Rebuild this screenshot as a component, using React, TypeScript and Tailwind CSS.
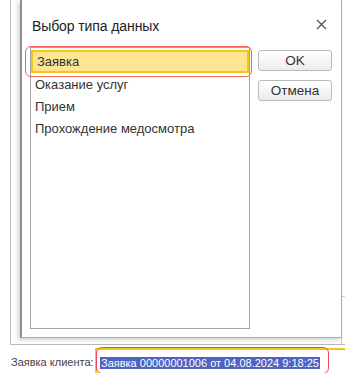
import React from "react";

const items = ["Заявка", "Оказание услуг", "Прием", "Прохождение медосмотра"];

function Button({ label }: { label: string }) {
  return (
    <button className="h-[21px] w-[74px] rounded-[3px] border border-[#b9b9b9] bg-gradient-to-b from-white to-[#ececec] text-[#333] text-[13.5px] leading-none">
      {label}
    </button>
  );
}

export default function App() {
  return (
    <div className="w-[345px] h-[373px] bg-white overflow-hidden text-[#333] [font-family:'Liberation_Sans',Arial,sans-serif]">
      {/* background form frame */}
      <div className="relative ml-[10px] h-[345px] border-l border-b border-[#b9b9b9]">
        <div className="absolute right-0 top-[296px] w-[4px] h-[48px] border-t border-l border-[#cfcfcf]" />

        {/* dialog */}
        <div className="relative ml-[9px] w-[322px] h-[338px] bg-white border-l-2 border-r border-b border-l-[#8f8f8f] border-r-[#a9a9a9] border-b-[#a9a9a9] shadow-[-2px_2px_4px_rgba(0,0,0,0.18)] flex flex-col">
          <div className="flex items-center justify-between pl-[10px] pr-[14px] pt-[16px] h-[47px] pb-[11px]">
            <span className="text-[14px] tracking-[-0.1px] text-[#222]">Выбор типа данных</span>
            <svg width="11" height="11" viewBox="0 0 11 11" className="mb-[3px]">
              <path d="M1 1 L10 10 M10 1 L1 10" stroke="#555" strokeWidth="1.3" />
            </svg>
          </div>

          <div className="flex flex-1 gap-[8px] pl-[8px] pb-[8px]">
            <div className="relative w-[220px] border border-[#a4a4a4] pt-[2px]">
              <div className="absolute left-[-6px] top-[-2px] w-[227px] h-[31px] rounded-[6px] border-[1.5px] border-[#f26060]" />
              {items.map((it, i) => (
                <div
                  key={it}
                  className={`h-[22px] flex items-center pl-[4px] text-[13px] text-[#333] ${
                    i === 0 ? "h-[23px] mb-[1px] bg-[#fde591] border-2 border-[#f5c518] pl-[1px]" : ""
                  }`}
                >
                  {it}
                </div>
              ))}
            </div>
            <div className="flex flex-col gap-[9px] pt-[3px]">
              <Button label="OK" />
              <Button label="Отмена" />
            </div>
          </div>
        </div>
      </div>

      {/* bottom field */}
      <div className="flex h-[28px]">
        <span className="ml-[11px] w-[84px] mt-[11px] text-[11px] text-[#444] leading-[13px] whitespace-nowrap">Заявка клиента:</span>
        <div className="relative mt-[3px] flex-1 border-l-2 border-t-2 border-[#f5c518]">
          <div className="absolute left-[-1px] top-[-3px] w-[233px] h-[27px] rounded-[6px] border-[1.5px] border-[#f24a4a]" />
          <span className="ml-[3px] mt-[5px] inline-block bg-[#4f63c2] px-[1px] text-white text-[11px] leading-[12px] whitespace-nowrap">
            Заявка 00000001006 от 04.08.2024 9:18:25
          </span>
        </div>
      </div>
    </div>
  );
}
